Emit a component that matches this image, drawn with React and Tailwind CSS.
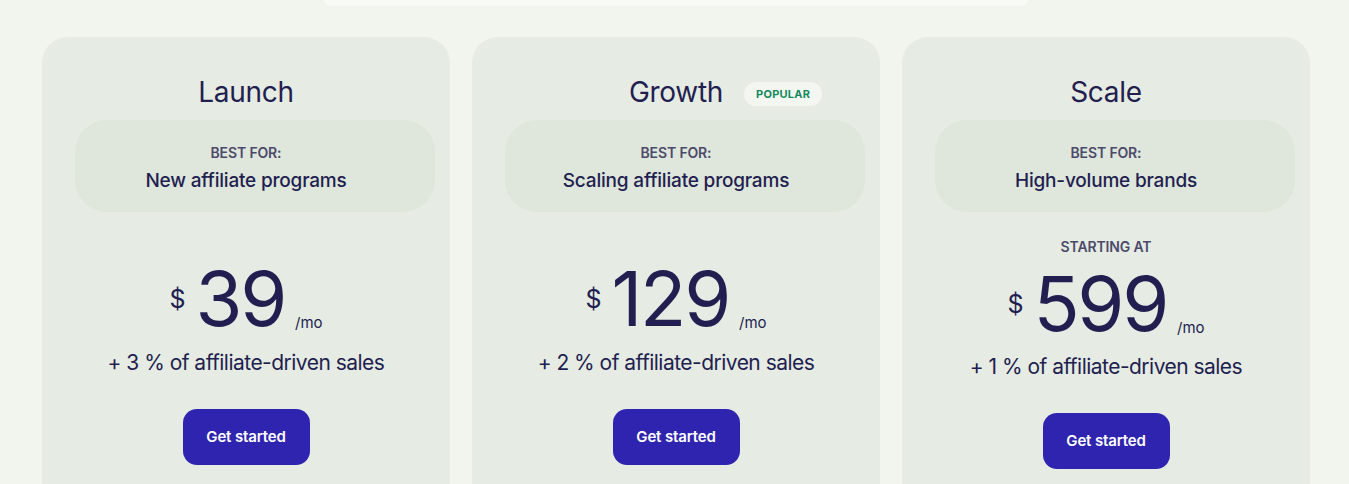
import React from "react";

const plans = [
  { name: "Launch", best: "New affiliate programs", price: "39", pct: "+ 3 % of affiliate-driven sales" },
  { name: "Growth", best: "Scaling affiliate programs", price: "129", pct: "+ 2 % of affiliate-driven sales", popular: true },
  { name: "Scale", best: "High-volume brands", price: "599", pct: "+ 1 % of affiliate-driven sales", starting: true },
];

function Card({ p }) {
  return (
    <div className="w-[408px] h-[480px] shrink-0 rounded-[26px] bg-[#e6ebe3] flex flex-col items-center pt-[37px]">
      <div className="relative h-[36px] flex items-center">
        <span className="text-[28px] leading-[36px] text-[#221f50] font-normal tracking-[-0.01em]">{p.name}</span>
        {p.popular && (
          <span className="absolute left-full ml-[21px] top-[8px] h-[24px] px-[12px] rounded-full bg-[#f4f7f1] text-[#14895c] text-[11px] font-bold flex items-center tracking-[0.02em]">
            POPULAR
          </span>
        )}
      </div>
      <div className="mt-[10px] ml-[18px] w-[360px] rounded-[32px] bg-[#dfe6db] flex flex-col items-center pt-[23px] pb-[17px] gap-[4px]">
        <span className="-ml-[18px] text-[14px] leading-[20px] font-semibold text-[#4c4a6a] tracking-[-0.01em]">BEST FOR:</span>
        <span className="-ml-[18px] text-[19px] leading-[28px] font-medium text-[#221f50] tracking-[-0.01em]">{p.best}</span>
      </div>
      {p.starting ? (
        <span className="mt-[25px] text-[14px] leading-[20px] font-semibold text-[#4c4a6a] tracking-[-0.01em]">STARTING AT</span>
      ) : null}
      <div className={(p.starting ? "mt-[9px]" : "mt-[49px]") + " flex items-center h-[74px]"}>
        <span className="text-[25px] leading-none text-[#221f50] mr-[10px] mt-[2px]">$</span>
        <span className="text-[76px] leading-[74px] text-[#221f50] tracking-[-0.03em]">{p.price}</span>
        <span className="self-end mb-[2px] ml-[10px] text-[15px] leading-[20px] text-[#221f50]">/mo</span>
      </div>
      <span className={(p.starting ? "mt-[13px]" : "mt-[14px]") + " text-[21px] leading-[28px] text-[#221f50] tracking-[-0.025em]"}>{p.pct}</span>
      <button className="mt-[32px] w-[127px] h-[56px] rounded-[14px] bg-[#2f24b0] text-white text-[15px] font-semibold tracking-[-0.01em]">
        Get started
      </button>
    </div>
  );
}

export default function App() {
  return (
    <div
      className="w-[1349px] h-[484px] overflow-hidden bg-[#f2f5ee] relative"
      style={{ fontFamily: "Inter, 'Noto Sans', sans-serif" }}
    >
      <div className="flex justify-center">
        <div className="w-[704px] h-[6px] ml-[2px] rounded-b-[12px] bg-[#f8faf5]" />
      </div>
      <div className="flex gap-[22px] pl-[42px] mt-[31px]">
        {plans.map((p) => (
          <Card key={p.name} p={p} />
        ))}
      </div>
    </div>
  );
}
